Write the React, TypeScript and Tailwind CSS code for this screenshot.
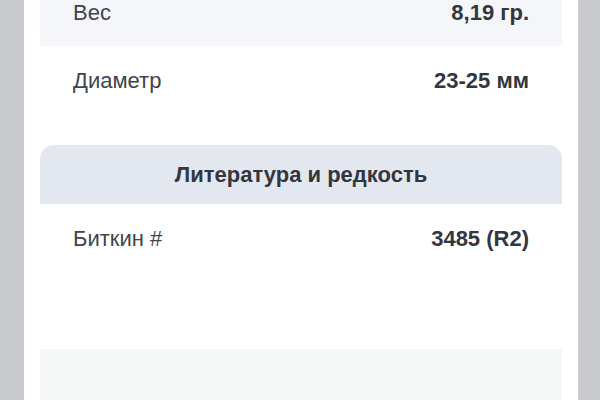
const rows = [
  { label: "Вес", value: "8,19 гр." },
  { label: "Диаметр", value: "23-25 мм" },
];

const Row = ({
  label,
  value,
  className,
}: {
  label: string;
  value: string;
  className?: string;
}) => (
  <div
    className={`flex items-center justify-between px-[33px] h-[68px] ${className ?? ""}`}
  >
    <span className="text-[22px] text-[#41444b]">{label}</span>
    <span className="text-[22px] font-bold text-[#33363d]">{value}</span>
  </div>
);

export default function App() {
  return (
    <div
      className="h-[400px] w-[600px] overflow-hidden bg-[#c7c9cc] pl-6 pr-[22px]"
      style={{ fontFamily: '"Liberation Sans", Arial, sans-serif' }}
    >
      <div className="h-[422px] bg-white px-4 -mt-[22px]">
        <Row label={rows[0].label} value={rows[0].value} className="bg-[#f5f6fa]" />
        <Row label={rows[1].label} value={rows[1].value} />

        <div className="mt-[31px] flex h-[59px] items-center justify-center rounded-t-[14px] bg-[#e3e7f0]">
          <span className="text-[22px] font-bold text-[#33363d]">
            Литература и редкость
          </span>
        </div>
        <Row label="Биткин #" value="3485 (R2)" />

        <div className="mt-[77px] h-[80px] bg-[#f6f8f8]" />
      </div>
    </div>
  );
}
